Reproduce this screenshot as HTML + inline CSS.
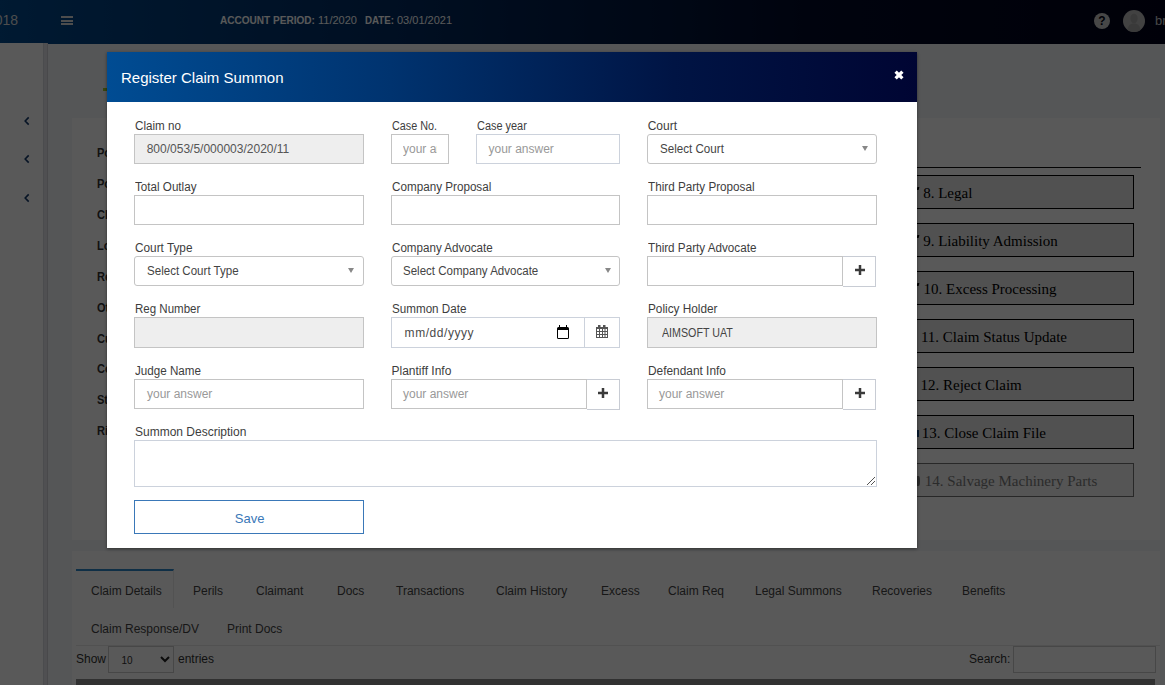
<!DOCTYPE html>
<html><head><meta charset="utf-8">
<style>
*{box-sizing:border-box;margin:0;padding:0}
html,body{width:1165px;height:685px;overflow:hidden;background:#f4f6f9;font-family:"Liberation Sans",sans-serif;}
.a{position:absolute}
#nav{left:0;top:0;width:1165px;height:44px;background:linear-gradient(to right,#004a8f 0%,#002a60 35%,#000a28 70%,#00021a 100%)}
#side{left:0;top:43px;width:43px;height:642px;background:#fff}
#sidestrip{left:43px;top:43px;width:5px;height:642px;background:#e4e6ea;border-left:1px solid #d8dade;border-right:1px solid #d0d2d6}
.panel{background:#fff}
.nt{font-size:11px;color:#fff;line-height:13px;white-space:nowrap;transform-origin:0 0}
.lbl{font-size:12px;color:#222;white-space:nowrap;line-height:14px}
.tab{font-size:12px;color:#444;white-space:nowrap;line-height:14px}
.box{border:1px solid #000;background:#e8e8e8}
.bt{font-family:"Liberation Serif",serif;font-size:15px;color:#000;white-space:nowrap;line-height:17px}
#ov{left:0;top:0;width:1165px;height:685px;background:rgba(0,0,0,.65)}
#modal{left:107px;top:52px;width:810px;height:496px;background:#fff;box-shadow:0 1px 3px rgba(0,0,0,.45)}
#mh{left:0;top:0;width:810px;height:50px;background:linear-gradient(to right,#004c93 0%,#00336f 35%,#001444 70%,#000533 100%)}
.fl{font-size:12px;color:#3d3d3d;white-space:nowrap;line-height:14px}
.inp{border:1px solid #c4c4c4;background:#fff;height:30px}
.dis{background:#eee}
.ph{font-size:12px;color:#999;white-space:nowrap;line-height:14px}
.sel{border:1px solid #c4c4c4;border-radius:3px;background:#fff;height:30px}
.caret{width:0;height:0;border-left:3.5px solid transparent;border-right:3.5px solid transparent;border-top:5px solid #888}
.addb{border:1px solid #c8ccd4;background:#fff;height:31px;width:35px}
</style></head><body>
<!-- background page -->
<div class="a" id="nav"></div>
<div class="a" style="left:-13px;top:12px;font-size:14px;color:#ddd;line-height:16px">2018</div>
<div class="a" style="left:61px;top:16px;width:12px;height:2px;background:#ddd"></div>
<div class="a" style="left:61px;top:19.5px;width:12px;height:2px;background:#ddd"></div>
<div class="a" style="left:61px;top:23px;width:12px;height:2px;background:#ddd"></div>
<div class="a nt" style="left:220.3px;top:13.5px;font-weight:bold;transform:scaleX(0.914)">ACCOUNT PERIOD:</div>
<div class="a nt" style="left:318px;top:13.5px">11/2020</div>
<div class="a nt" style="left:365px;top:13.5px;font-weight:bold;transform:scaleX(0.884)">DATE:</div>
<div class="a nt" style="left:397px;top:13.5px">03/01/2021</div>
<div class="a" style="left:1094px;top:12.7px;width:16px;height:16px;border-radius:50%;background:#ccc;color:#001;font-size:12px;font-weight:bold;text-align:center;line-height:16px">?</div>
<svg class="a" style="left:1123px;top:10px" width="22" height="22" viewBox="0 0 22 22"><defs><clipPath id="cc"><circle cx="11" cy="11" r="11"/></clipPath></defs><circle cx="11" cy="11" r="11" fill="#bcbcbc"/><g clip-path="url(#cc)" fill="#a6a6a6"><ellipse cx="11" cy="8.5" rx="3.6" ry="4.8"/><path d="M4 24C4 16 7 13.5 11 13.5C15 13.5 18 16 18 24Z"/></g></svg>
<div class="a" style="left:1155px;top:13px;font-size:13px;color:#ccc;line-height:15px">br</div>
<div class="a" id="side"></div>
<div class="a" id="sidestrip"></div>



<svg class="a" style="left:22px;top:114.7px" width="10" height="12"><path d="M6.7 2.4L3.2 6L6.7 9.6" fill="none" stroke="#153a6a" stroke-width="1.6"/></svg>
<svg class="a" style="left:22px;top:152.8px" width="10" height="12"><path d="M6.7 2.4L3.2 6L6.7 9.6" fill="none" stroke="#153a6a" stroke-width="1.6"/></svg>
<svg class="a" style="left:22px;top:191.7px" width="10" height="12"><path d="M6.7 2.4L3.2 6L6.7 9.6" fill="none" stroke="#153a6a" stroke-width="1.6"/></svg>
<div class="a" style="left:103px;top:88px;width:5px;height:3px;background:#a0c830"></div>

<div class="a panel" style="left:72px;top:118px;width:1088px;height:422px"></div>
<div class="a panel" style="left:72px;top:551px;width:1088px;height:134px"></div>

<div class="a" style="left:97px;top:146.0px;font-size:12px;font-weight:bold;color:#333;line-height:14px;transform:scaleX(0.92);transform-origin:0 0">Policy</div>
<div class="a" style="left:97px;top:176.9px;font-size:12px;font-weight:bold;color:#333;line-height:14px;transform:scaleX(0.92);transform-origin:0 0">Policy</div>
<div class="a" style="left:97px;top:207.8px;font-size:12px;font-weight:bold;color:#333;line-height:14px;transform:scaleX(0.92);transform-origin:0 0">Claim</div>
<div class="a" style="left:97px;top:238.8px;font-size:12px;font-weight:bold;color:#333;line-height:14px;transform:scaleX(0.92);transform-origin:0 0">Loss</div>
<div class="a" style="left:97px;top:269.7px;font-size:12px;font-weight:bold;color:#333;line-height:14px;transform:scaleX(0.92);transform-origin:0 0">Report</div>
<div class="a" style="left:97px;top:300.6px;font-size:12px;font-weight:bold;color:#333;line-height:14px;transform:scaleX(0.92);transform-origin:0 0">Other</div>
<div class="a" style="left:97px;top:331.5px;font-size:12px;font-weight:bold;color:#333;line-height:14px;transform:scaleX(0.92);transform-origin:0 0">Currency</div>
<div class="a" style="left:97px;top:362.4px;font-size:12px;font-weight:bold;color:#333;line-height:14px;transform:scaleX(0.92);transform-origin:0 0">Cover</div>
<div class="a" style="left:97px;top:393.4px;font-size:12px;font-weight:bold;color:#333;line-height:14px;transform:scaleX(0.92);transform-origin:0 0">Status</div>
<div class="a" style="left:97px;top:424.3px;font-size:12px;font-weight:bold;color:#333;line-height:14px;transform:scaleX(0.92);transform-origin:0 0">Risk</div>

<div class="a" style="left:880px;top:167px;width:261px;height:1px;background:#111"></div>
<div class="a box" style="left:880px;top:175px;width:254px;height:34px"></div>
<div class="a bt" style="left:923.2px;top:185.2px">8. Legal</div>
<div class="a box" style="left:880px;top:223px;width:254px;height:34px"></div>
<div class="a bt" style="left:923.2px;top:233.2px">9. Liability Admission</div>
<div class="a box" style="left:880px;top:271px;width:254px;height:34px"></div>
<div class="a bt" style="left:923.6px;top:281.2px">10. Excess Processing</div>
<div class="a box" style="left:880px;top:319px;width:254px;height:34px"></div>
<div class="a bt" style="left:920.9px;top:329.2px">11. Claim Status Update</div>
<div class="a box" style="left:880px;top:367px;width:254px;height:34px"></div>
<div class="a bt" style="left:920.5px;top:377.2px">12. Reject Claim</div>
<div class="a box" style="left:880px;top:415px;width:254px;height:34px"></div>
<div class="a bt" style="left:921.8px;top:425.2px">13. Close Claim File</div>
<div class="a box" style="left:880px;top:463px;width:254px;height:34px;opacity:.55"></div>
<div class="a bt" style="left:924.8px;top:473.2px;opacity:.5">14. Salvage Machinery Parts</div>

<div class="a" style="left:917px;top:186.5px;width:2px;height:3px;background:#000;transform:skewX(-15deg)"></div>
<div class="a" style="left:917px;top:234.5px;width:2px;height:3px;background:#000;transform:skewX(-15deg)"></div>
<div class="a" style="left:917px;top:282.5px;width:2px;height:3px;background:#000;transform:skewX(-15deg)"></div>
<div class="a" style="left:917px;top:430px;width:1.5px;height:7px;background:#1c4f86"></div>
<div class="a" style="left:917px;top:476px;width:3px;height:10px;border-radius:0 50% 50% 0;background:#444;opacity:.7"></div>
<!-- tabs -->
<div class="a" style="left:76px;top:569px;width:98px;height:39px;background:#fff;border-top:2px solid #2b86c8;border-right:1px solid #ececec"></div>
<div class="a tab" style="left:91px;top:584px">Claim Details</div>
<div class="a tab" style="left:193px;top:584px">Perils</div>
<div class="a tab" style="left:256px;top:584px">Claimant</div>
<div class="a tab" style="left:337px;top:584px">Docs</div>
<div class="a tab" style="left:396px;top:584px">Transactions</div>
<div class="a tab" style="left:496px;top:584px">Claim History</div>
<div class="a tab" style="left:601px;top:584px">Excess</div>
<div class="a tab" style="left:668px;top:584px">Claim Req</div>
<div class="a tab" style="left:755px;top:584px">Legal Summons</div>
<div class="a tab" style="left:872px;top:584px">Recoveries</div>
<div class="a tab" style="left:962px;top:584px">Benefits</div>
<div class="a tab" style="left:91px;top:622px">Claim Response/DV</div>
<div class="a tab" style="left:227px;top:622px">Print Docs</div>
<div class="a" style="left:76px;top:645px;width:1084px;height:1px;background:#e8e8e8"></div>
<div class="a tab" style="left:76px;top:652px;color:#333">Show</div>
<div class="a" style="left:108px;top:646px;width:66px;height:27px;border:1px solid #ccc;background:#fff"></div>
<div class="a" style="left:121.5px;top:655px;font-size:10px;color:#333;line-height:12px">10</div>
<svg class="a" style="left:159px;top:654px" width="12" height="10"><path d="M2 3L6 7L10 3" fill="none" stroke="#222" stroke-width="2"/></svg>
<div class="a tab" style="left:178px;top:652px;color:#333">entries</div>
<div class="a tab" style="left:969px;top:652px;color:#333">Search:</div>
<div class="a" style="left:1013px;top:646px;width:143px;height:27px;border:1px solid #ccc;background:#fff"></div>
<div class="a" style="left:76px;top:679px;width:1079px;height:6px;background:#8c8c8c"></div>

<div class="a" id="ov"></div>

<!-- modal -->
<div class="a" id="modal">
  <div class="a" id="mh"></div>
  <div class="a" style="left:14px;top:16.5px;font-size:15px;color:#fff;line-height:17px;white-space:nowrap">Register Claim Summon</div>
  <svg class="a" style="left:786px;top:16.5px" width="12" height="12"><path d="M2.6 2.6L9.4 9.4M9.4 2.6L2.6 9.4" stroke="#fff" stroke-width="3.3"/></svg>
</div>
<!-- modal body -->
<div class="a fl" style="left:134.8px;top:118.54px;transform:scaleX(0.97);transform-origin:0 0">Claim no</div>
<div class="a fl" style="left:391.5px;top:118.54px;transform:scaleX(0.9);transform-origin:0 0">Case No.</div>
<div class="a fl" style="left:476.9px;top:118.54px;transform:scaleX(0.91);transform-origin:0 0">Case year</div>
<div class="a fl" style="left:647.7px;top:118.54px">Court</div>
<div class="a inp dis" style="left:134px;top:134px;width:230px;height:30px;"></div>
<div class="a fl" style="left:146.7px;top:141.84px;color:#555">800/053/5/000003/2020/11</div>
<div class="a inp" style="left:391px;top:134px;width:58px;height:30px;"></div>
<div class="a ph" style="left:403px;top:141.64px;"><span style="display:inline-block;width:34px;overflow:hidden;vertical-align:top">your answer</span></div>
<div class="a inp" style="left:476px;top:134px;width:144px;height:30px;border-color:#ccd2dc"></div>
<div class="a ph" style="left:488.5px;top:141.64px;">your answer</div>
<div class="a sel" style="left:647px;top:134px;width:230px;height:30px;"></div>
<div class="a fl" style="left:659.6px;top:141.64px;color:#444;transform:scaleX(0.967);transform-origin:0 0">Select Court</div>
<div class="a caret" style="left:862px;top:146px"></div>
<div class="a fl" style="left:135px;top:179.84px;transform:scaleX(0.97);transform-origin:0 0">Total Outlay</div>
<div class="a fl" style="left:391.5px;top:179.84px;transform:scaleX(0.973);transform-origin:0 0">Company Proposal</div>
<div class="a fl" style="left:648px;top:179.84px;transform:scaleX(0.974);transform-origin:0 0">Third Party Proposal</div>
<div class="a inp" style="left:134px;top:195px;width:230px;height:30px;"></div>
<div class="a inp" style="left:391px;top:195px;width:229px;height:30px;"></div>
<div class="a inp" style="left:647px;top:195px;width:230px;height:30px;"></div>
<div class="a fl" style="left:135px;top:240.84px;transform:scaleX(0.983);transform-origin:0 0">Court Type</div>
<div class="a fl" style="left:391.5px;top:240.84px;transform:scaleX(0.968);transform-origin:0 0">Company Advocate</div>
<div class="a fl" style="left:648px;top:240.84px;transform:scaleX(0.973);transform-origin:0 0">Third Party Advocate</div>
<div class="a sel" style="left:134px;top:256px;width:230px;height:30px;"></div>
<div class="a fl" style="left:147px;top:263.64px;color:#444;transform:scaleX(0.963);transform-origin:0 0">Select Court Type</div>
<div class="a caret" style="left:348px;top:268px"></div>
<div class="a sel" style="left:391px;top:256px;width:229px;height:30px;"></div>
<div class="a fl" style="left:403.4px;top:263.64px;color:#444;transform:scaleX(0.961);transform-origin:0 0">Select Company Advocate</div>
<div class="a caret" style="left:605px;top:268px"></div>
<div class="a inp" style="left:647px;top:256px;width:196px;height:30px;"></div>
<div class="a addb" style="left:843px;top:256px;width:33px;height:31px;border-left:none"></div>
<svg class="a" style="left:853.5px;top:264px" width="12" height="12"><path d="M1 6H11M6 1V11" stroke="#3a3a3a" stroke-width="2.5"/></svg>
<div class="a fl" style="left:135px;top:301.84px;transform:scaleX(0.96);transform-origin:0 0">Reg Number</div>
<div class="a fl" style="left:391.5px;top:301.84px;transform:scaleX(0.97);transform-origin:0 0">Summon Date</div>
<div class="a fl" style="left:648px;top:301.84px;transform:scaleX(0.983);transform-origin:0 0">Policy Holder</div>
<div class="a inp dis" style="left:134px;top:317px;width:230px;height:31px;"></div>
<div class="a inp" style="left:391px;top:317px;width:229px;height:31px;border-color:#ccd2dc"></div>
<div class="a" style="left:584px;top:318px;width:1px;height:29px;background:#ccd2dc"></div>
<div class="a fl" style="left:404.6px;top:325.74px;color:#4a4a4a;letter-spacing:0.55px">mm/dd/yyyy</div>
<div class="a" style="left:557px;top:327px;width:12px;height:12px;border:1.5px solid #000;border-top-width:3px;border-radius:1.5px"></div>
<div class="a" style="left:558.7px;top:325px;width:1.6px;height:3px;background:#000"></div>
<div class="a" style="left:565.7px;top:325px;width:1.6px;height:3px;background:#000"></div>
<svg class="a" style="left:596px;top:324px" width="13" height="15" viewBox="0 0 13 15"><g fill="#555"><rect x="2" y="1" width="2.5" height="3"/><rect x="7" y="1" width="2.5" height="3"/><rect x="0" y="3" width="12" height="2"/></g><g fill="none" stroke="#555" stroke-width="1"><path d="M0.5 5V14M3.5 5V14M6.5 5V14M9 5V14M11.5 5V14M0 7.5H12M0 10.5H12M0 13.5H12"/></g></svg>
<div class="a inp dis" style="left:647px;top:317px;width:230px;height:31px;"></div>
<div class="a fl" style="left:662px;top:325.74px;color:#444;transform:scaleX(0.89);transform-origin:0 0">AIMSOFT UAT</div>
<div class="a fl" style="left:135px;top:363.84px;transform:scaleX(0.97);transform-origin:0 0">Judge Name</div>
<div class="a fl" style="left:391.5px;top:363.84px">Plantiff Info</div>
<div class="a fl" style="left:648px;top:363.84px;transform:scaleX(0.99);transform-origin:0 0">Defendant Info</div>
<div class="a inp" style="left:134px;top:379px;width:230px;height:30px;"></div>
<div class="a ph" style="left:147px;top:386.84px;">your answer</div>
<div class="a inp" style="left:391px;top:379px;width:196px;height:30px;"></div>
<div class="a addb" style="left:587px;top:379px;width:33px;height:31px;border-left:none"></div>
<div class="a ph" style="left:403px;top:386.84px;">your answer</div>
<svg class="a" style="left:597px;top:387px" width="12" height="12"><path d="M1 6H11M6 1V11" stroke="#3a3a3a" stroke-width="2.5"/></svg>
<div class="a inp" style="left:647px;top:379px;width:196px;height:30px;"></div>
<div class="a addb" style="left:843px;top:379px;width:33px;height:31px;border-left:none"></div>
<div class="a ph" style="left:659px;top:386.84px;">your answer</div>
<svg class="a" style="left:853.5px;top:387px" width="12" height="12"><path d="M1 6H11M6 1V11" stroke="#3a3a3a" stroke-width="2.5"/></svg>
<div class="a fl" style="left:135px;top:424.84px">Summon Description</div>
<div class="a inp" style="left:134px;top:440px;width:743px;height:47px;border-color:#ccd2dc"></div>
<svg class="a" style="left:864px;top:474px" width="12" height="12"><path d="M3 11L11 3M7 11L11 7" stroke="#555" stroke-width="1"/></svg>
<div class="a" style="left:134px;top:500px;width:230px;height:34px;border:1px solid #3a78b8;background:#fff"></div>
<div class="a" style="left:234.8px;top:511px;font-size:13px;line-height:15px;color:#3a78b8">Save</div>
</body></html>
